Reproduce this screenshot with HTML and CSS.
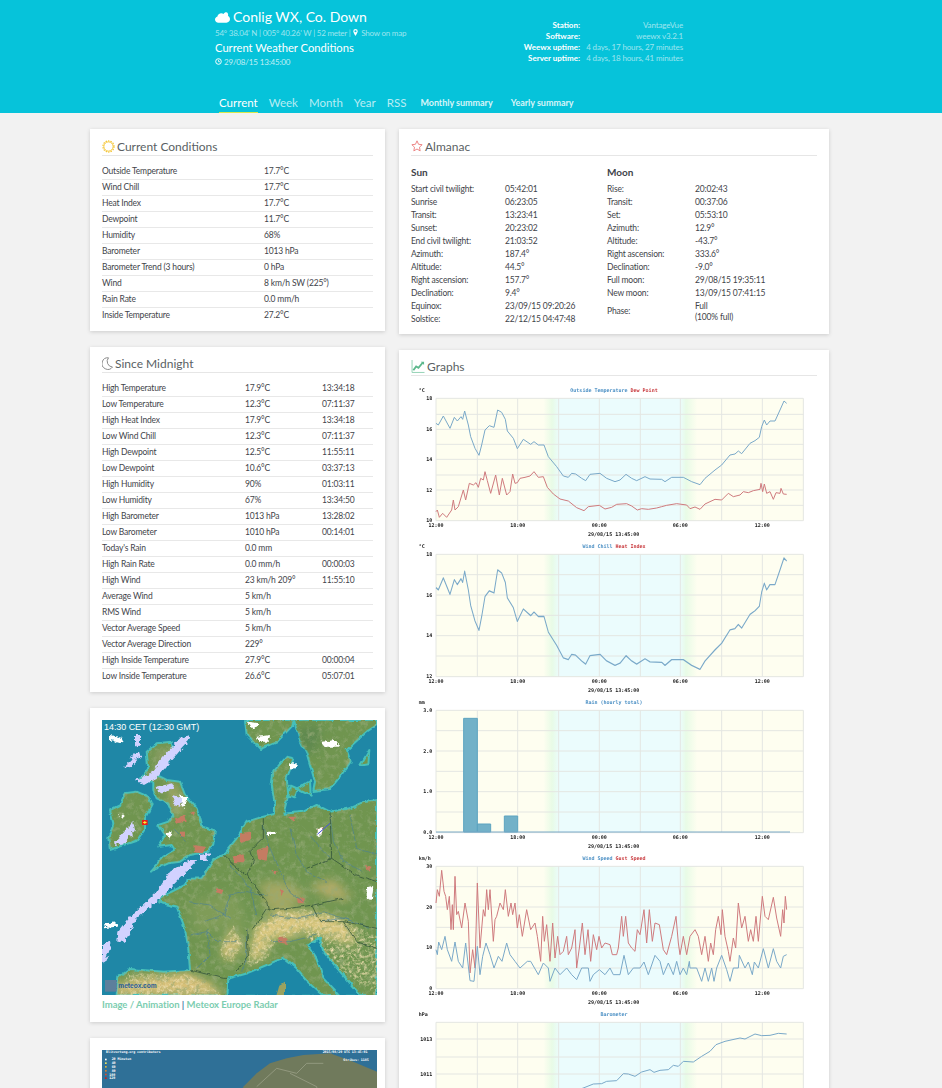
FILE: index.html
```html
<!DOCTYPE html>
<html lang="en">
<head>
<meta charset="utf-8">
<title>Conlig WX, Co. Down</title>
<link rel="stylesheet" href="styles.css">
</head>
<body>
<header class="site-header">
  <div class="header-top">
    <div class="station">
      <h1 class="station-name">
        <svg class="ico-cloud" viewBox="0 0 16 11"><path d="M3.600 11C1.600 11 0 9.500 0 7.600 0 6 1.100 4.700 2.600 4.300 3 2.400 4.700 1 6.700 1c.9 0 1.700.3 2.400.8C9.700.7 10.800 0 11.900 0c1.700.2 2.500 1.800 2 3.800 1.300.6 2.100 1.900 2.100 3.400C16 9.300 14.300 11 12.200 11z" fill="#fff"/></svg>
        Conlig WX, Co. Down</h1>
      <p class="coords">54° 38.04' N | 005° 40.26' W | 52 meter | <svg class="ico-small" viewBox="0 0 8 10"><path d="M4 0a3.200 3.200 0 0 0-3.200 3.200C.8 5.200 4 10 4 10s3.200-4.800 3.200-6.800A3.200 3.200 0 0 0 4 0zm0 4.700a1.500 1.500 0 1 1 0-3 1.500 1.500 0 0 1 0 3z" fill="#fff"/></svg> Show on map</p>
      <h2 class="page-title">Current Weather Conditions</h2>
      <p class="stamp"><svg class="ico-small" viewBox="0 0 10 10"><circle cx="5" cy="5" r="4" fill="none" stroke="#fff" stroke-width="1.400"/><path d="M5 2.500V5.300H7.300" fill="none" stroke="#fff" stroke-width="1.100"/></svg> 29/08/15 13:45:00</p>
    </div>
    <table class="station-info">
      <tr><th>Station:</th><td>VantageVue</td></tr>
      <tr><th>Software:</th><td>weewx v3.2.1</td></tr>
      <tr><th>Weewx uptime:</th><td>4 days, 17 hours, 27 minutes</td></tr>
      <tr><th>Server uptime:</th><td>4 days, 18 hours, 41 minutes</td></tr>
    </table>
  </div>
  <nav class="main-nav">
    <a class="nav-link is-active">Current</a>
    <a class="nav-link">Week</a>
    <a class="nav-link">Month</a>
    <a class="nav-link">Year</a>
    <a class="nav-link">RSS</a>
    <a class="nav-small nav-monthly">Monthly summary</a>
    <a class="nav-small nav-yearly">Yearly summary</a>
  </nav>
</header>

<main class="layout">
  <div class="col-left">
    <section class="card">
      <h3 class="card-title">
        <svg class="ico-title" viewBox="0 0 14 14"><circle cx="7" cy="7" r="5" fill="none" stroke="#f4c430" stroke-width="1"/><circle cx="7" cy="7" r="6" fill="none" stroke="#f4c430" stroke-width="1.200" stroke-dasharray="1.500 1.200"/></svg>
        Current Conditions</h3>
      <table class="data-table cur-table">
        <tr><td class="c-label">Outside Temperature</td><td>17.7°C</td></tr>
        <tr><td class="c-label">Wind Chill</td><td>17.7°C</td></tr>
        <tr><td class="c-label">Heat Index</td><td>17.7°C</td></tr>
        <tr><td class="c-label">Dewpoint</td><td>11.7°C</td></tr>
        <tr><td class="c-label">Humidity</td><td>68%</td></tr>
        <tr><td class="c-label">Barometer</td><td>1013 hPa</td></tr>
        <tr><td class="c-label">Barometer Trend (3 hours)</td><td>0 hPa</td></tr>
        <tr><td class="c-label">Wind</td><td>8 km/h SW (225°)</td></tr>
        <tr><td class="c-label">Rain Rate</td><td>0.0 mm/h</td></tr>
        <tr><td class="c-label">Inside Temperature</td><td>27.2°C</td></tr>
      </table>
    </section>

    <section class="card">
      <h3 class="card-title title-tight">
        <svg class="ico-title ico-moon" viewBox="0 0 11 13"><path d="M6.500.8A5.800 5.800 0 1 0 10.500 10 5.600 5.600 0 0 1 6.500.8z" fill="none" stroke="#8a8a8a" stroke-width="1"/></svg>
        Since Midnight</h3>
      <table class="data-table mid-table">
        <tr><td class="m-label">High Temperature</td><td class="m-val">17.9°C</td><td>13:34:18</td></tr>
        <tr><td class="m-label">Low Temperature</td><td class="m-val">12.3°C</td><td>07:11:37</td></tr>
        <tr><td class="m-label">High Heat Index</td><td class="m-val">17.9°C</td><td>13:34:18</td></tr>
        <tr><td class="m-label">Low Wind Chill</td><td class="m-val">12.3°C</td><td>07:11:37</td></tr>
        <tr><td class="m-label">High Dewpoint</td><td class="m-val">12.5°C</td><td>11:55:11</td></tr>
        <tr><td class="m-label">Low Dewpoint</td><td class="m-val">10.6°C</td><td>03:37:13</td></tr>
        <tr><td class="m-label">High Humidity</td><td class="m-val">90%</td><td>01:03:11</td></tr>
        <tr><td class="m-label">Low Humidity</td><td class="m-val">67%</td><td>13:34:50</td></tr>
        <tr><td class="m-label">High Barometer</td><td class="m-val">1013 hPa</td><td>13:28:02</td></tr>
        <tr><td class="m-label">Low Barometer</td><td class="m-val">1010 hPa</td><td>00:14:01</td></tr>
        <tr><td class="m-label">Today's Rain</td><td class="m-val">0.0 mm</td><td></td></tr>
        <tr><td class="m-label">High Rain Rate</td><td class="m-val">0.0 mm/h</td><td>00:00:03</td></tr>
        <tr><td class="m-label">High Wind</td><td class="m-val">23 km/h 209°</td><td>11:55:10</td></tr>
        <tr><td class="m-label">Average Wind</td><td class="m-val">5 km/h</td><td></td></tr>
        <tr><td class="m-label">RMS Wind</td><td class="m-val">5 km/h</td><td></td></tr>
        <tr><td class="m-label">Vector Average Speed</td><td class="m-val">5 km/h</td><td></td></tr>
        <tr><td class="m-label">Vector Average Direction</td><td class="m-val">229°</td><td></td></tr>
        <tr><td class="m-label">High Inside Temperature</td><td class="m-val">27.9°C</td><td>00:00:04</td></tr>
        <tr><td class="m-label">Low Inside Temperature</td><td class="m-val">26.6°C</td><td>05:07:01</td></tr>
      </table>
    </section>

    <section class="card card-media">
      <svg class="radar" viewBox="36 15 825 825">
        <defs>
          <filter id="rough" x="0" y="0" width="100%" height="100%"><feTurbulence type="fractalNoise" baseFrequency=".04" numOctaves="4" seed="3"/><feDisplacementMap in="SourceGraphic" scale="12" xChannelSelector="R" yChannelSelector="G"/></filter>
          <filter id="fluffy" x="-5%" y="-5%" width="110%" height="110%"><feTurbulence type="fractalNoise" baseFrequency=".09" numOctaves="3" seed="8"/><feDisplacementMap in="SourceGraphic" scale="16" xChannelSelector="R" yChannelSelector="G"/><feGaussianBlur stdDeviation="1.500"/></filter>
          <filter id="soft" x="-20%" y="-20%" width="140%" height="140%"><feGaussianBlur stdDeviation="14"/></filter>
          <filter id="terrain" x="0" y="0" width="100%" height="100%"><feTurbulence type="fractalNoise" baseFrequency=".06" numOctaves="5" seed="11"/><feColorMatrix values="0 0 0 0 .3  0 0 0 0 .4  0 0 0 0 .18  0 0 0 2 -.95"/></filter>
          <filter id="speckle" x="0" y="0" width="100%" height="100%"><feTurbulence type="fractalNoise" baseFrequency=".1" numOctaves="3" seed="5"/><feColorMatrix values="0 0 0 0 .84  0 0 0 0 .72  0 0 0 0 .42  0 0 0 2.200 -.95"/></filter>
          <clipPath id="landclip">
            <path d="M465 15 470 60 510 102 560 82 605 35 612 15z"/>
            <path d="M612 15 628 70 650 115 675 200 670 228 720 222 750 185 782 140 770 105 830 50 861 30 861 15z"/>
            <path d="M55 370 70 325 60 285 90 270 105 235 140 230 175 245 185 270 165 310 165 345 145 375 100 390 60 405z"/>
            <path d="M170 110 200 85 245 80 250 110 225 150 200 180 230 195 270 200 285 240 320 280 335 335 375 345 370 385 355 410 300 420 270 440 235 445 180 470 220 425 255 405 245 390 205 395 225 360 205 330 235 320 250 300 235 265 200 250 190 225 190 200 150 195 175 160z"/>
            <path d="M861 255 820 262 780 280 720 290 680 270 640 290 580 296 595 240 590 190 600 165 610 130 590 125 550 170 545 210 555 270 555 296 520 305 470 320 440 370 400 420 370 435 335 490 290 492 285 510 215 545 205 562 260 575 285 640 295 700 300 765 220 770 120 762 85 787 80 840 861 840z"/>
          </clipPath>
          <clipPath id="alpsclip">
            <path d="M480 700 500 630 570 590 650 585 730 600 800 640 861 660 861 840 700 730 640 650 560 670 530 730 470 760z"/>
            <path d="M90 840 110 775 300 780 400 840z"/>
            <path d="M390 700 430 630 460 690 430 740 400 740z"/>
          </clipPath>
        </defs>
        <rect x="36" y="15" width="825" height="825" fill="#1f87a6"/>
        <g filter="url(#rough)">
          <g fill="#6f9550" stroke="#46c0ba" stroke-width="6" stroke-linejoin="round">
            <path d="M465 15 470 60 510 102 560 82 605 35 612 15z"/>
            <path d="M612 15 628 70 650 115 675 200 670 228 720 222 750 185 782 140 770 105 830 50 861 30 861 15z"/>
            <path d="M810 152 838 105 835 148z"/>
            <path d="M620 222 660 198 662 242z"/>
            <path d="M600 215 622 225 615 250 595 245z"/>
            <path d="M55 370 70 325 60 285 90 270 105 235 140 230 175 245 185 270 165 310 165 345 145 375 100 390 60 405z"/>
            <path d="M170 110 200 85 245 80 250 110 225 150 200 180 230 195 270 200 285 240 320 280 335 335 375 345 370 385 355 410 300 420 270 440 235 445 180 470 220 425 255 405 245 390 205 395 225 360 205 330 235 320 250 300 235 265 200 250 190 225 190 200 150 195 175 160z"/>
            <path d="M861 255 820 262 780 280 720 290 680 270 640 290 580 296 595 240 590 190 600 165 610 130 590 125 550 170 545 210 555 270 555 296 520 305 470 320 440 370 400 420 370 435 335 490 290 492 285 510 215 545 205 562 260 575 285 640 295 700 300 765 220 770 120 762 85 787 80 840 861 840z"/>
          </g>
          <g clip-path="url(#landclip)">
            <g filter="url(#soft)">
              <path d="M140 790 240 780 300 775 380 815 400 840 60 840 85 810z" fill="#d8c078"/>
              <path d="M480 690 500 630 570 590 650 590 720 600 790 640 790 690 720 670 650 650 600 665 540 670 525 720 480 740z" fill="#d9c67c"/>
              <path d="M395 690 430 640 455 690 430 735 400 735z" fill="#cfc078"/>
              <path d="M660 510 730 490 790 550 740 555 690 540z" fill="#b0ab68"/>
              <path d="M510 500 600 500 650 540 600 580 530 590z" fill="#a3a764"/>
              <path d="M300 560 440 530 470 640 400 640 320 660z" fill="#7f9c58"/>
              <path d="M230 210 260 210 280 290 250 300z" fill="#a9a868"/>
              <path d="M190 110 240 100 210 170z" fill="#8f9d66"/>
              <path d="M620 40 690 30 680 110 640 110z" fill="#5f8850"/>
            </g>
            <rect x="36" y="15" width="825" height="825" filter="url(#terrain)"/>
          </g>
          <g clip-path="url(#alpsclip)">
            <rect x="36" y="580" width="825" height="260" filter="url(#speckle)"/>
          </g>
          <g fill="#c47c62">
            <path d="M500 405 535 395 530 440 505 435z"/><path d="M430 425 460 415 465 445 430 445z"/>
            <path d="M378 520 400 525 395 540 378 535z"/><path d="M562 665 590 665 590 690 565 685z"/>
            <path d="M255 310 285 300 290 320 260 325z"/><path d="M310 390 345 395 340 415 312 412z"/>
            <path d="M450 355 480 350 480 375 450 385z"/><path d="M270 350 285 350 285 365 270 365z"/>
            <path d="M620 550 645 550 640 565 625 565z"/><path d="M825 450 845 455 835 470z"/>
            <path d="M680 340 700 335 695 355z"/><path d="M590 305 615 305 610 320z"/>
            <path d="M545 465 560 465 555 478z"/><path d="M570 525 582 525 578 540z"/><path d="M300 290 312 290 308 302z"/>
          </g>
          <g fill="#1f87a6" stroke="#46c0ba" stroke-width="6" stroke-linejoin="round">
            <path d="M412 845 415 790 470 775 530 750 580 728 620 760 650 795 705 845z"/>
            <path d="M655 690 690 668 700 710 750 770 815 845 750 845 700 790 680 730z"/>
          </g>
          <path d="M555 845 565 812 585 800 585 845z" fill="#9aa25f"/>
          <g fill="none" stroke="#4a7f97" stroke-width="1.800">
            <path d="M340 620 400 600 420 540 470 530 530 540"/><path d="M300 660 350 650 380 680 440 680"/>
            <path d="M520 330 540 400 570 470 600 530 640 560"/><path d="M600 340 620 420 650 470 710 500"/>
            <path d="M470 640 470 720 455 770"/><path d="M540 680 600 680 680 660"/>
            <path d="M720 300 730 380 760 440 820 470"/><path d="M690 620 760 610 840 640"/>
            <path d="M420 450 480 520 500 600"/><path d="M300 560 360 570 420 610"/>
            <path d="M660 360 690 400 720 430"/><path d="M780 300 800 400 861 420"/><path d="M350 640 360 720 320 760"/>
            <path d="M540 600 620 610 700 590 790 620"/><path d="M250 340 290 380"/>
          </g>
          <g fill="none" stroke="#2f4f38" stroke-width="2.200">
            <path d="M400 420 430 450 470 480 490 440 480 410 520 370 520 310"/>
            <path d="M470 480 530 560 535 585 600 580 670 570 760 550"/><path d="M720 290 725 430 800 480 861 500"/>
            <path d="M650 460 725 430"/><path d="M490 640 530 580"/><path d="M665 570 690 620 760 620 861 640"/>
            <path d="M470 640 475 720 440 770"/><path d="M300 765 400 790 415 790"/><path d="M760 620 800 680 861 700"/>
          </g>
        </g>
        <g fill="#d2d2ff" filter="url(#fluffy)">
          <path d="M82 680 85 650 120 605 200 530 240 470 300 435 325 435 270 490 210 550 140 610 105 680z"/>
          <path d="M36 690 60 678 62 695 45 745 36 740z"/>
          <path d="M135 195 180 180 215 130 270 70 300 60 290 85 240 140 200 190 165 210z"/>
          <path d="M135 60 150 60 150 90 135 95z"/><path d="M100 155 130 130 145 135 120 160z"/>
          <path d="M70 390 100 350 130 320 135 345 105 385z"/>
          <path d="M250 240 280 250 270 275 250 270z"/><path d="M330 420 360 415 350 435 330 435z"/>
          <path d="M120 125 150 110 155 125 125 135z"/><path d="M200 215 250 205 245 225 205 235z"/>
        </g>
        <g fill="#fff" filter="url(#fluffy)">
          <path d="M500 65 540 60 535 80 505 80z"/><path d="M470 20 510 25 490 45z"/><path d="M695 80 740 75 745 95 700 95z"/>
          <path d="M600 145 620 145 620 160 600 160z"/><path d="M680 342 700 340 690 362 680 362z"/>
          <path d="M830 520 850 515 845 555 830 550z"/><path d="M225 355 245 350 240 370z"/><path d="M90 300 100 295 100 310z"/>
          <path d="M530 350 560 350 555 360 530 360z"/><path d="M270 240 295 250 280 280z"/><path d="M42 625 85 622 80 635 45 640z"/><path d="M60 60 100 70 95 85 60 75z"/>
        </g>
        <path d="M682 358 720 325" stroke="#4a55d8" stroke-width="3" fill="none"/>
        <rect x="156" y="315" width="17" height="15" fill="#e8241a"/>
        <path d="M164.500 318v9M159.500 322.500h10" stroke="#ffee33" stroke-width="3"/>
        <text class="radar-time" x="42" y="45">14:30 CET (12:30 GMT)</text>
        <rect x="45" y="795" width="35" height="35" fill="#5d7f9c"/>
        <text class="radar-brand" x="85" y="820">meteox.com</text>
      </svg>
      <p class="radar-links"><a>Image / Animation</a> <span class="sep">|</span> <a>Meteox Europe Radar</a></p>
    </section>

    <section class="card card-media">
      <svg class="lightning" viewBox="36 60 825 825">
        <rect x="36" y="60" width="825" height="825" fill="#2f7097"/>
        <path d="M861 125 790 95 720 70 640 75 590 85 540 100 500 130 460 170 440 260 861 400z" fill="#707a5c"/>
        <path d="M500 170 560 115 620 130 650 100 700 100M600 130 680 170 690 240" fill="none" stroke="#a3a88f" stroke-width="2"/>
        <text class="lg-text" x="48" y="70">Blitzortung.org contributors</text>
        <text class="lg-text" x="698" y="70">2015/08/29 UTC 13:45:01</text>
        <text class="lg-text" x="65" y="91">20 Minuten</text>
        <text class="lg-text" x="760" y="92">Strikes:  1185</text>
        <text class="lg-text" x="65" y="103">40</text>
        <text class="lg-text" x="65" y="114">60</text>
        <text class="lg-text" x="65" y="126">80</text>
        <text class="lg-text" x="58" y="137">100</text>
        <text class="lg-text" x="58" y="148">120</text>
        <rect x="45" y="86" width="5" height="5" fill="#fff"/><rect x="45" y="97" width="5" height="5" fill="#e8e060"/><rect x="45" y="108" width="5" height="5" fill="#d8b040"/>
        <rect x="45" y="120" width="5" height="5" fill="#d88030"/><rect x="45" y="131" width="5" height="5" fill="#d85030"/><rect x="45" y="142" width="5" height="5" fill="#c82020"/>
      </svg>
    </section>
  </div>

  <div class="col-right">
    <section class="card card-almanac">
      <h3 class="card-title">
        <svg class="ico-title ico-star" viewBox="0 0 14 14"><path d="M7 1 8.800 5 13 5.500 9.900 8.400 10.700 12.700 7 10.500 3.300 12.700 4.100 8.400 1 5.500 5.200 5z" fill="none" stroke="#ec7f7f" stroke-width="1.100" stroke-linejoin="round"/></svg>
        Almanac</h3>
      <div class="almanac">
        <div class="alm-col alm-sun">
          <h4 class="alm-head">Sun</h4>
          <table class="alm-table">
            <tr><td class="a-sun">Start civil twilight:</td><td>05:42:01</td></tr>
            <tr><td class="a-sun">Sunrise</td><td>06:23:05</td></tr>
            <tr><td class="a-sun">Transit:</td><td>13:23:41</td></tr>
            <tr><td class="a-sun">Sunset:</td><td>20:23:02</td></tr>
            <tr><td class="a-sun">End civil twilight:</td><td>21:03:52</td></tr>
            <tr><td class="a-sun">Azimuth:</td><td>187.4°</td></tr>
            <tr><td class="a-sun">Altitude:</td><td>44.5°</td></tr>
            <tr><td class="a-sun">Right ascension:</td><td>157.7°</td></tr>
            <tr><td class="a-sun">Declination:</td><td>9.4°</td></tr>
            <tr><td class="a-sun">Equinox:</td><td>23/09/15 09:20:26</td></tr>
            <tr><td class="a-sun">Solstice:</td><td>22/12/15 04:47:48</td></tr>
          </table>
        </div>
        <div class="alm-col">
          <h4 class="alm-head">Moon</h4>
          <table class="alm-table">
            <tr><td class="a-moon">Rise:</td><td>20:02:43</td></tr>
            <tr><td class="a-moon">Transit:</td><td>00:37:06</td></tr>
            <tr><td class="a-moon">Set:</td><td>05:53:10</td></tr>
            <tr><td class="a-moon">Azimuth:</td><td>12.9°</td></tr>
            <tr><td class="a-moon">Altitude:</td><td>-43.7°</td></tr>
            <tr><td class="a-moon">Right ascension:</td><td>333.6°</td></tr>
            <tr><td class="a-moon">Declination:</td><td>-9.0°</td></tr>
            <tr><td class="a-moon">Full moon:</td><td>29/08/15 19:35:11</td></tr>
            <tr><td class="a-moon">New moon:</td><td>13/09/15 07:41:15</td></tr>
            <tr><td class="a-moon">Phase:</td><td class="a-phase">Full<br>(100% full)</td></tr>
          </table>
        </div>
      </div>
    </section>

    <section class="card">
      <h3 class="card-title title-tight">
        <svg class="ico-title ico-graph" viewBox="0 0 14 14"><path d="M.6 0V13.400H14" fill="none" stroke="#8ccfb0" stroke-width="1"/><path d="M2 11 5 7 7.500 8.500 12 3" fill="none" stroke="#5cb88c" stroke-width="2"/><path d="M10 2H13.500V5.500z" fill="#5cb88c"/></svg>
        Graphs</h3>
      <div class="graphs">
        <svg class="chart" viewBox="30 105 1200 468">
          <defs>
            <linearGradient id="dusk" x1="0" x2="1" y1="0" y2="0"><stop offset="0" stop-color="#fefef0"/><stop offset=".55" stop-color="#e8fbe6"/><stop offset="1" stop-color="#ebfcfd"/></linearGradient>
            <linearGradient id="dawn" x1="0" x2="1" y1="0" y2="0"><stop offset="0" stop-color="#ebfcfd"/><stop offset=".35" stop-color="#e8fbe6"/><stop offset="1" stop-color="#fefef0"/></linearGradient>
            <g id="plotbg">
              <rect x="108" y="145" width="1102" height="367" fill="#fefef0"/>
              <rect x="430" y="145" width="48" height="367" fill="url(#dusk)"/>
              <rect x="476" y="145" width="365" height="367" fill="#ebfcfd"/>
              <rect x="840" y="145" width="52" height="367" fill="url(#dawn)"/>
              <path class="grid" d="M108 145V512M232 145V512M353 145V512M476 145V512M598 145V512M721 145V512M841 145V512M965 145V512M1087 145V512M1210 145V512"/>
              <path class="grid" d="M108 145H1210M108 512H1210"/>
              <text class="tick" x="108" y="532" text-anchor="middle">12:00</text>
              <text class="tick" x="353" y="532" text-anchor="middle">18:00</text>
              <text class="tick" x="598" y="532" text-anchor="middle">00:00</text>
              <text class="tick" x="841" y="532" text-anchor="middle">06:00</text>
              <text class="tick" x="1087" y="532" text-anchor="middle">12:00</text>
              <text class="tick" x="641" y="557" text-anchor="middle">29/08/15 13:45:00</text>
            </g>
            <polyline id="temp" points="108,220 115,225 130,198 150,235 163,202 172,213 183,200 188,208 194,183 205,225 212,260 225,295 237,316 245,285 255,240 268,227 282,232 293,180 305,187 316,208 322,243 340,265 352,296 370,268 392,283 402,275 415,285 432,285 445,320 470,350 490,378 505,382 515,370 527,372 545,385 557,392 570,373 600,370 620,385 645,395 660,390 678,373 695,385 710,392 735,380 750,387 785,388 795,395 815,382 850,382 875,395 900,404 915,385 945,360 965,345 990,315 1005,312 1015,303 1025,311 1050,280 1065,272 1078,262 1085,230 1093,210 1100,225 1110,213 1125,213 1140,180 1152,153 1160,160"/>
          </defs>
          <use href="#plotbg"/>
          <path class="grid" d="M108 193H1210M108 238H1210M108 283H1210M108 328H1210M108 375H1210M108 420H1210M108 466H1210"/>
          <text class="tick" x="56" y="127">°C</text>
          <text class="tick" x="97" y="150" text-anchor="end">18</text><text class="tick" x="97" y="242" text-anchor="end">16</text>
          <text class="tick" x="97" y="333" text-anchor="end">14</text><text class="tick" x="97" y="425" text-anchor="end">12</text>
          <text class="tick" x="97" y="515" text-anchor="end">10</text>
          <text class="legend" x="642" y="127" text-anchor="middle"><tspan class="s-blue">Outside Temperature</tspan> <tspan class="s-red">Dew Point</tspan></text>
          <use href="#temp" class="line-blue"/>
          <polyline class="line-red" points="108,485 112,480 118,502 128,490 140,502 155,480 160,450 165,480 175,470 190,420 197,450 208,400 220,405 228,398 235,412 242,385 250,390 255,365 262,392 272,430 287,375 298,435 307,385 320,435 330,425 338,372 345,400 352,398 360,385 375,382 390,378 402,365 415,382 430,380 442,412 460,432 480,447 505,453 530,473 552,482 565,470 598,466 615,477 635,472 650,463 680,461 695,468 712,480 725,476 745,478 770,474 785,470 800,466 830,461 860,465 870,476 885,471 900,478 915,462 945,448 965,450 985,430 1000,440 1020,435 1030,425 1045,428 1060,422 1080,418 1083,400 1088,425 1093,402 1100,430 1110,425 1120,448 1128,428 1140,430 1143,415 1150,432 1160,433"/>
        </svg>

        <svg class="chart" viewBox="30 105 1200 468">
          <use href="#plotbg"/>
          <path class="grid" d="M108 206H1210M108 267H1210M108 328H1210M108 389H1210M108 450H1210"/>
          <text class="tick" x="56" y="127">°C</text>
          <text class="tick" x="97" y="150" text-anchor="end">18</text><text class="tick" x="97" y="272" text-anchor="end">16</text>
          <text class="tick" x="97" y="394" text-anchor="end">14</text><text class="tick" x="97" y="515" text-anchor="end">12</text>
          <text class="legend" x="642" y="127" text-anchor="middle"><tspan class="s-blue">Wind Chill</tspan> <tspan class="s-red">Heat Index</tspan></text>
          <use href="#temp" class="line-blue" transform="translate(0 145) scale(1 1.333) translate(0 -145)"/>
        </svg>

        <svg class="chart" viewBox="30 105 1200 468">
          <use href="#plotbg"/>
          <path class="grid" d="M108 206H1210M108 267H1210M108 328H1210M108 389H1210M108 450H1210"/>
          <text class="tick" x="56" y="127">mm</text>
          <text class="tick" x="97" y="150" text-anchor="end">3.0</text><text class="tick" x="97" y="272" text-anchor="end">2.0</text>
          <text class="tick" x="97" y="394" text-anchor="end">1.0</text><text class="tick" x="97" y="515" text-anchor="end">0.0</text>
          <text class="legend" x="642" y="127" text-anchor="middle"><tspan class="s-blue">Rain (hourly total)</tspan></text>
          <path class="bar" d="M191 510V169H232V510zM232 510V486H272V510zM313 510V462H353V510z"/>
          <path class="line-blue" d="M108 510H1170"/>
        </svg>

        <svg class="chart" viewBox="30 105 1200 468">
          <use href="#plotbg"/>
          <path class="grid" d="M108 206H1210M108 267H1210M108 328H1210M108 389H1210M108 450H1210"/>
          <text class="tick" x="56" y="127">km/h</text>
          <text class="tick" x="97" y="150" text-anchor="end">30</text><text class="tick" x="97" y="272" text-anchor="end">20</text>
          <text class="tick" x="97" y="394" text-anchor="end">10</text><text class="tick" x="97" y="515" text-anchor="end">0</text>
          <text class="legend" x="642" y="127" text-anchor="middle"><tspan class="s-blue">Wind Speed</tspan> <tspan class="s-red">Gust Speed</tspan></text>
          <g transform="translate(0 110)">
            <polyline class="line-red" points="108,145 112,105 118,125 125,47 132,110 137,125 142,165 148,125 153,225 157,150 160,225 165,65 170,180 175,170 185,220 195,145 205,200 210,355 218,285 225,340 232,85 240,280 250,165 255,185 260,105 265,165 270,105 280,260 285,195 290,185 300,145 310,165 316,105 325,185 333,145 338,180 345,145 352,220 358,180 367,245 380,165 392,225 405,205 412,245 422,320 428,185 433,260 440,210 450,320 458,205 465,310 473,245 480,300 490,290 500,245 505,300 515,280 525,225 530,340 538,280 547,205 555,300 564,225 572,320 580,240 590,285 597,245 605,280 615,265 630,270 637,300 650,300 655,280 665,185 670,245 677,185 685,265 695,280 705,290 712,225 720,240 732,165 740,265 748,165 757,260 765,205 778,210 790,285 800,300 815,245 828,185 835,265 840,300 850,245 860,300 870,245 885,225 895,245 905,300 915,245 925,320 932,265 940,300 947,225 955,185 963,240 967,165 975,245 985,290 990,320 1000,250 1007,280 1015,145 1025,220 1035,185 1045,260 1052,225 1060,260 1068,185 1075,260 1087,125 1095,185 1105,195 1120,128 1130,190 1142,245 1148,165 1152,205 1156,125 1160,165"/>
            <polyline class="line-blue" points="108,285 112,300 116,262 125,285 135,245 142,285 155,320 165,262 175,320 188,340 197,265 210,378 222,380 232,275 240,360 248,305 258,265 270,300 282,340 295,305 306,320 320,265 330,300 345,320 360,340 382,320 392,320 415,360 430,325 445,340 450,380 465,340 480,360 500,340 515,360 530,375 545,340 565,340 570,380 580,360 598,345 615,360 630,340 640,360 660,360 672,302 685,360 700,340 720,340 732,322 745,360 765,302 780,320 790,360 805,325 820,360 830,320 840,360 850,340 860,360 868,320 870,340 890,340 905,380 915,340 925,380 935,340 942,380 950,340 965,302 980,345 990,380 1000,340 1015,340 1018,302 1035,340 1045,322 1057,360 1063,322 1075,340 1090,282 1105,340 1120,282 1130,320 1142,340 1150,305 1160,300"/>
          </g>
        </svg>

        <svg class="chart" viewBox="30 105 1200 468">
          <use href="#plotbg"/>
          <path class="grid" d="M108 195H1210M108 249H1210M108 300H1210M108 352H1210M108 404H1210M108 456H1210"/>
          <text class="tick" x="56" y="127">hPa</text>
          <text class="tick" x="97" y="200" text-anchor="end">1013</text><text class="tick" x="97" y="305" text-anchor="end">1011</text>
          <text class="legend" x="642" y="127" text-anchor="middle"><tspan class="s-blue">Barometer</tspan></text>
          <polyline class="line-blue" points="108,470 300,440 400,400 555,340 580,330 605,329 620,322 650,320 670,299 685,300 705,307 725,294 750,287 762,295 780,289 805,287 820,274 835,277 850,262 880,264 905,247 930,232 948,212 975,202 1020,192 1035,195 1065,180 1085,185 1110,184 1135,178 1160,180"/>
        </svg>
      </div>
    </section>
  </div>
</main>
</body>
</html>
```

FILE: styles.css
```css
* { box-sizing: border-box; }
html, body { margin: 0; padding: 0; }
body {
  height: 100vh;
  overflow: hidden;
  background: #f2f2f2;
  color: #3f444a;
  font-family: Lato, "Liberation Sans", sans-serif;
  font-size: 8.5px;
  letter-spacing: -.18px;
}
h1, h2, h3, h4, p { margin: 0; font-weight: 400; }
table { border-collapse: collapse; }
td, th { padding: 0; }

/* Header */
.site-header {
  height: 113px;
  background: #06c3da;
  color: #fff;
  padding-left: 215px;
  display: flex;
  flex-direction: column;
  letter-spacing: 0;
}
.header-top { display: flex; height: 90px; }
.station { width: 300px; padding-top: 8px; }
.station-name { font-size: 14px; line-height: 18px; display: flex; align-items: center; gap: 3px; }
.ico-cloud { width: 15px; height: 11px; }
.coords { font-size: 8px; line-height: 12px; margin-top: 1px; letter-spacing: -.22px; color: rgba(255,255,255,.6); }
.ico-small { width: 7px; height: 7px; }
.page-title { font-size: 11.2px; line-height: 14px; margin-top: 2px; }
.stamp { font-size: 8px; line-height: 12px; margin-top: 1px; letter-spacing: -.15px; color: rgba(255,255,255,.75); }
.station-info { margin: 19px 0 0 0; height: 44px; font-size: 8px; align-self: flex-start; }
.station-info tr { height: 11px; }
.station-info th { width: 65px; text-align: right; font-weight: 700; white-space: nowrap; }
.station-info td { width: 103px; text-align: right; color: rgba(255,255,255,.6); white-space: nowrap; letter-spacing: -.14px; }
.main-nav { display: flex; align-items: flex-end; height: 23px; padding-left: 4px; }
.nav-link {
  font-size: 11.5px;
  height: 23px;
  padding-top: 2px;
  line-height: 21px;
  margin-right: 11px;
  color: rgba(255,255,255,.72);
}
.nav-link.is-active { color: #fff; border-bottom: 1px solid #d8e84a; }
.nav-small { font-size: 9px; font-weight: 700; height: 23px; padding-top: 2px; line-height: 21px; color: rgba(255,255,255,.85); letter-spacing: -.03px; }
.nav-monthly { margin-left: 3px; }
.nav-yearly { margin-left: 18px; }

/* Layout */
.layout { display: flex; gap: 14px; padding: 16px 0 0 90px; align-items: flex-start; }
.col-left { width: 295px; display: flex; flex-direction: column; gap: 16px; }
.col-right { width: 430px; display: flex; flex-direction: column; gap: 16px; }
.card {
  background: #fff;
  padding: 8px 12px;
  box-shadow: 0 1px 4px rgba(0,0,0,.16);
}
.card-media { padding: 12px 8px 7px 12px; }
.card-almanac { padding-bottom: 9px; }
.card-title {
  display: flex;
  align-items: center;
  gap: 2px;
  height: 19px;
  font-size: 12px;
  letter-spacing: 0;
  color: #5a5f64;
  border-bottom: 1px solid #e6e6e6;
  margin-bottom: 7px;
}
.title-tight { height: 18px; }
.ico-title { width: 13px; height: 13px; flex: none; }
.ico-moon { width: 11px; }
.ico-star { width: 12px; height: 12px; }
.ico-graph { width: 14px; }

/* Tables */
.data-table { width: 271px; table-layout: fixed; }
.data-table tr { height: 16px; border-bottom: 1px solid #e8e8e8; }
.data-table tr:last-child { border-bottom: 0; }
.c-label { width: 162px; }
.m-label { width: 143px; }
.m-val { width: 77px; }

/* Almanac */
.almanac { display: flex; padding-top: 2px; }
.alm-col { width: 196px; }
.alm-head { font-size: 10px; line-height: 14px; font-weight: 700; margin-bottom: 3px; letter-spacing: 0; }
.alm-table tr { height: 13px; }
.a-sun { width: 94px; }
.a-moon { width: 88px; }
.a-phase { line-height: 11px; padding-top: 2px; }

/* Radar */
.radar { display: block; width: 275px; height: 275px; }
.radar-time { font: 27px "Liberation Sans", sans-serif; fill: #fff; }
.radar-brand { font: 700 20px "Liberation Sans", sans-serif; fill: #2a5f98; }
.radar-links { line-height: 20px; font-size: 9.5px; font-weight: 700; letter-spacing: -.03px; color: #7ccdb0; }
.radar-links .sep { color: #4a7fa8; }
.lightning { display: block; width: 275px; height: 275px; }
.lg-text { font: 700 10px "DejaVu Sans Mono", monospace; fill: #fff; }

/* Charts */
.graphs { padding-top: 2px; margin-left: -1px; }
.chart { display: block; width: 400px; height: 156px; filter: blur(.35px); }
.grid { fill: none; stroke: #e4e6e2; stroke-width: 3; }
.tick { font: 700 15px "DejaVu Sans Mono", monospace; fill: #222; letter-spacing: 0; }
.legend { font: 700 15px "DejaVu Sans Mono", monospace; letter-spacing: 0; }
.s-blue { fill: #4a8fc4; }
.s-red { fill: #c8393d; }
.line-blue { fill: none; stroke: #7aa9c9; stroke-width: 3; stroke-linejoin: round; }
.line-red { fill: none; stroke: #cf7b7e; stroke-width: 3; stroke-linejoin: round; }
.bar { fill: #72b1c8; stroke: #5da4c0; stroke-width: 3; }
```
